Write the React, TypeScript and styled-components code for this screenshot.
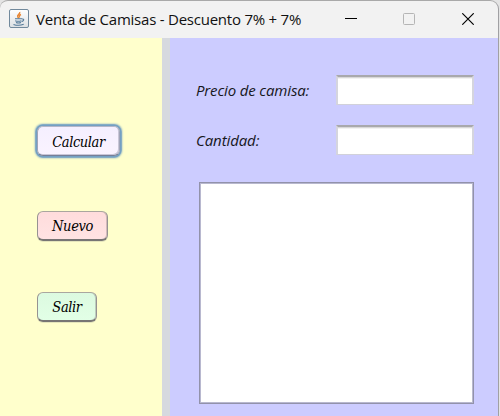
import React from "react";
import styled, { createGlobalStyle } from "styled-components";

const GlobalStyle = createGlobalStyle`
  * { box-sizing: border-box; }
  body { margin: 0; background: #e4e4e4; overflow: hidden; }
`;

const Frame = styled.div`
  width: 499px;
  height: 416px;
  display: flex;
  flex-direction: column;
  overflow: hidden;
  background: #f2f2f2;
  border-top: 1px solid #a9a9a9;
  border-right: 1px solid #a0a0a3;
  border-radius: 8px 9px 0 0;
`;

const TitleBar = styled.header`
  height: 37px;
  flex: none;
  display: flex;
  align-items: center;
  padding: 0 1px 1px 9px;
  color: #111;
`;

const AppIcon = styled.svg`
  flex: none;
  margin-right: 7px;
`;

const Title = styled.h1<{ $spacing: number }>`
  margin: 0;
  flex: 1;
  font: 400 15px/20px "Open Sans", "Noto Sans", sans-serif;
  letter-spacing: ${(p) => p.$spacing}px;
  white-space: nowrap;
`;

const WindowControls = styled.div`
  display: flex;
  height: 100%;
`;

const Control = styled.button<{ $color: string }>`
  width: 58.5px;
  height: 36px;
  padding: 0;
  border: 0;
  background: none;
  color: ${(p) => p.$color};
  display: grid;
  place-items: center;
`;

const Body = styled.main`
  flex: 1;
  display: flex;
`;

const Sidebar = styled.aside`
  width: 162px;
  background: #ffffcc;
  padding: 86px 0 0 36px;
  display: flex;
  flex-direction: column;
  align-items: flex-start;
`;

const Divider = styled.div`
  width: 8px;
  background: #d6d9df;
`;

const ActionButton = styled.button<{ $w: number; $top: string; $bottom: string; $gap: number; $focused?: boolean }>`
  width: ${(p) => p.$w}px;
  height: 30px;
  margin: ${(p) => p.$gap}px 0 0 1px;
  padding: 1px 0 0;
  border: 1.5px solid;
  border-color: ${(p) => (p.$focused ? "#b5b6c9 #a1a4b8 #777e97" : "#aaa69f #969292 #777574")};
  border-bottom-width: ${(p) => (p.$focused ? 1 : 2)}px;
  border-radius: 6px;
  background: linear-gradient(${(p) => p.$top}, ${(p) => p.$bottom});
  box-shadow: ${(p) =>
    p.$focused
      ? "0 0 0 1.5px #74a0c3, 0 0 2px 1.5px #74a0c3, inset -1px -1px 0 #c9c6d8"
      : "0 1px 0 #e5e5bc, inset -1px 0 0 rgba(110, 100, 100, .3)"};
  color: #000;
  font: italic 400 14.5px/20px "DejaVu Serif Condensed", "DejaVu Serif", serif;
  letter-spacing: -0.4px;
`;

const Panel = styled.section`
  flex: 1;
  background: #ccccff;
  padding: 37px 24px 0 26px;
`;

const Field = styled.label`
  display: flex;
  justify-content: space-between;
  height: 30px;
  margin-bottom: 20px;
`;

const FieldLabel = styled.span<{ $spacing: number }>`
  font: italic 400 15px/31px "Open Sans", "Noto Sans", sans-serif;
  letter-spacing: ${(p) => p.$spacing}px;
  color: #17171c;
  white-space: nowrap;
`;

const TextInput = styled.input`
  width: 138px;
  height: 30px;
  padding: 2px 6px;
  border: solid;
  border-width: 2px 2px 1px;
  border-color: #a8a8ac #d5d5de #d1d1da;
  border-radius: 0;
  background: #fff;
  box-shadow: inset 0 1px 0 #d8d8d8, inset 0 2px 0 #f2f2f2;
  outline: none;
`;

const Output = styled.textarea`
  display: block;
  width: 275px;
  height: 222px;
  margin: 27px 0 0 3px;
  border: 1px solid #9292aa;
  border-radius: 0;
  background: #fff;
  box-shadow: inset 0 0 0 1px #b8b8cf;
  resize: none;
  outline: none;
`;

const JavaIcon = () => (
  <AppIcon width="20" height="20" viewBox="0 0 20 20" fill="none">
    <defs>
      <linearGradient id="tile" x2="0" y2="1">
        <stop stopColor="#fff" />
        <stop offset="1" stopColor="#dce0e3" />
      </linearGradient>
    </defs>
    <rect x=".5" y=".5" width="19" height="18" rx="1.5" fill="url(#tile)" stroke="#71899c" />
    <path d="M10.7 3c.8 2-3 2.8-2 4.7.3.7 1 1 1 1.7M12 5.5c-1.9.8-2 1.8-1.3 3" stroke="#e88735" strokeWidth="1.4" />
    <path d="M6 9.8h7M6.2 11.7c2 .8 4.3.7 6.2 0M7 13.5c1.7.7 3.4.6 5 0M4.5 15.4c3 1.1 7.4 1 10.2-.2M13 10c2.6-.4 2 2-.3 2.6" stroke="#537998" strokeWidth="1.1" />
  </AppIcon>
);

export default function App() {
  return (
    <>
      <GlobalStyle />
      <Frame>
        <TitleBar>
          <JavaIcon />
          <Title $spacing={-0.23}>Venta de Camisas - Descuento 7% + 7%</Title>
          <WindowControls>
            <Control $color="#000" aria-label="Minimizar">
              <svg width="12" height="12"><path d="M0 5.5h12" stroke="currentColor" /></svg>
            </Control>
            <Control $color="#b5b5b5" aria-label="Maximizar">
              <svg width="12" height="12"><rect x=".5" y=".5" width="11" height="11" rx="1" fill="none" stroke="currentColor" /></svg>
            </Control>
            <Control $color="#000" aria-label="Cerrar">
              <svg width="12" height="12"><path d="M.3.3l11.4 11.4M11.7.3L.3 11.7" stroke="currentColor" strokeWidth="1.15" /></svg>
            </Control>
          </WindowControls>
        </TitleBar>
        <Body>
          <Sidebar>
            <ActionButton $w={83} $gap={2} $top="#f5efff" $bottom="#faf3ff" $focused>Calcular</ActionButton>
            <ActionButton $w={71} $gap={55} $top="#ffdcdc" $bottom="#ffe3e3">Nuevo</ActionButton>
            <ActionButton $w={60} $gap={51} $top="#dcfae0" $bottom="#e2ffe6">Salir</ActionButton>
          </Sidebar>
          <Divider />
          <Panel>
            <Field>
              <FieldLabel $spacing={-0.15}>Precio de camisa:</FieldLabel>
              <TextInput />
            </Field>
            <Field>
              <FieldLabel $spacing={-0.1}>Cantidad:</FieldLabel>
              <TextInput />
            </Field>
            <Output aria-label="Resultado" />
          </Panel>
        </Body>
      </Frame>
    </>
  );
}
